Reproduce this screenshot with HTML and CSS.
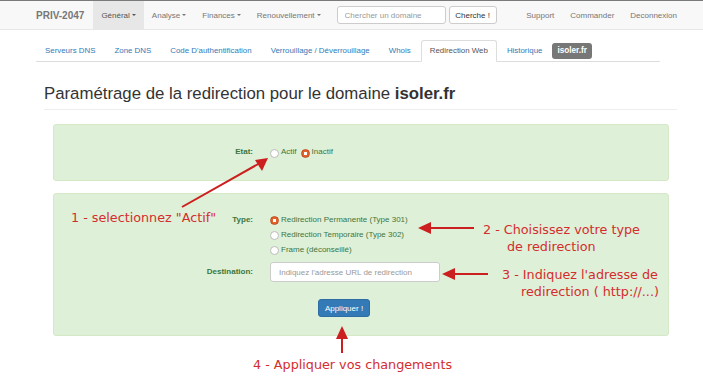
FILE: index.html
```html
<!DOCTYPE html>
<html>
<head>
    <title>Redirection Web - isoler.fr</title>
    <link rel="stylesheet" href="styles.css">
</head>
<body>
    <nav class="navbar">
        <span class="brand">PRIV-2047</span>
        <ul class="nav-menu">
            <li class="active"><a href="#">Général<span class="caret"></span></a></li>
            <li><a href="#">Analyse<span class="caret"></span></a></li>
            <li><a href="#">Finances<span class="caret"></span></a></li>
            <li><a href="#">Renouvellement<span class="caret"></span></a></li>
        </ul>
        <form class="search-form">
            <input type="text" class="search-input" placeholder="Chercher un domaine">
            <button type="button" class="search-button">Cherche !</button>
        </form>
        <ul class="nav-menu nav-right">
            <li><a href="#">Support</a></li>
            <li><a href="#">Commander</a></li>
            <li><a href="#">Deconnexion</a></li>
        </ul>
    </nav>

    <ul class="tabs">
        <li><a href="#">Serveurs DNS</a></li>
        <li><a href="#">Zone DNS</a></li>
        <li><a href="#">Code D'authentification</a></li>
        <li><a href="#">Verrouillage / Déverrouillage</a></li>
        <li><a href="#">Whois</a></li>
        <li class="active"><a href="#">Redirection Web</a></li>
        <li><a href="#">Historique</a></li>
        <li class="badge-item"><span class="badge">isoler.fr</span></li>
    </ul>

    <h3 class="page-title">Paramétrage de la redirection pour le domaine <b>isoler.fr</b></h3>

    <div class="panel panel-state">
        <div class="form-row">
            <label class="form-label">Etat:</label>
            <div class="form-field inline">
                <span class="radio"><input type="radio" name="etat"> Actif</span>
                <span class="radio"><input type="radio" name="etat" checked> Inactif</span>
            </div>
        </div>
    </div>

    <div class="panel panel-options">
        <div class="form-row">
            <label class="form-label">Type:</label>
            <div class="form-field">
                <div class="radio"><input type="radio" name="type" checked> Redirection Permanente (Type 301)</div>
                <div class="radio"><input type="radio" name="type"> Redirection Temporaire (Type 302)</div>
                <div class="radio"><input type="radio" name="type"> Frame (déconseillé)</div>
            </div>
        </div>
        <div class="form-row row-dest">
            <label class="form-label">Destination:</label>
            <div class="form-field">
                <input type="text" class="dest-input" placeholder="Indiquez l'adresse URL de redirection">
            </div>
        </div>
        <div class="form-row row-submit">
            <button type="button" class="btn-apply">Appliquer !</button>
        </div>
    </div>

    <!-- annotations drawn over the screenshot -->
    <svg class="arrows" width="703" height="391" viewBox="0 0 703 391">
        <g stroke="#cc1f1f" stroke-width="2" fill="#cc1f1f">
            <line x1="182" y1="207" x2="260" y2="163" />
            <polygon points="268,158 255,160 262,171" stroke="none" />
            <line x1="474" y1="228" x2="428" y2="228" />
            <polygon points="418,228 431,222 431,234" stroke="none" />
            <line x1="488" y1="274" x2="452" y2="274" />
            <polygon points="442,274 455,268 455,280" stroke="none" />
            <line x1="342" y1="353" x2="342" y2="336" />
            <polygon points="342,326 336,339 348,339" stroke="none" />
        </g>
    </svg>
    <div class="note note-1">1 - selectionnez "Actif"</div>
    <div class="note note-2">2 - Choisissez votre type<br><span class="indent-2">de redirection</span></div>
    <div class="note note-3">3 - Indiquez l'adresse de<br><span class="indent-3">redirection ( http://...)</span></div>
    <div class="note note-4">4 - Appliquer vos changements</div>
</body>
</html>
```

FILE: styles.css
```css
body {
    margin: 0;
    min-height: 100vh;
    position: relative;
    font-family: "Liberation Sans", Arial, sans-serif;
    font-size: 8px;
    color: #333;
    background-color: #fff;
}

a {
    text-decoration: none;
}

/* top navbar */
.navbar {
    display: flex;
    align-items: center;
    height: 28px;
    padding: 0 18px 0 36px;
    background-color: #f8f8f8;
    border-top: 1px solid #7a7a7a;
    border-bottom: 1px solid #e7e7e7;
}

.brand {
    font-size: 10px;
    font-weight: bold;
    color: #777;
    margin-right: 9px;
}

.nav-menu {
    display: flex;
    list-style: none;
    margin: 0;
    padding: 0;
    height: 100%;
}

.nav-menu li a {
    display: flex;
    align-items: center;
    height: 100%;
    padding: 0 8px;
    color: #777;
}

.nav-menu li.active a {
    background-color: #e7e7e7;
    color: #555;
}

.caret {
    display: inline-block;
    margin-left: 2px;
    border-top: 2px solid;
    border-left: 2px solid transparent;
    border-right: 2px solid transparent;
}

.nav-right {
    margin-left: auto;
}

.search-form {
    display: flex;
    gap: 3px;
    margin-left: 8px;
}

.search-input {
    width: 109px;
    height: 18px;
    box-sizing: border-box;
    border: 1px solid #ccc;
    border-radius: 3px;
    padding: 0 7px;
    font-family: inherit;
    font-size: 8px;
    color: #555;
}

.search-input::placeholder {
    color: #999;
}

.search-button {
    width: 48px;
    height: 18px;
    border: 1px solid #ccc;
    border-radius: 3px;
    background-color: #fff;
    font-family: inherit;
    font-size: 8px;
    font-weight: normal;
    color: #333;
    padding: 0;
}

/* tabs */
.tabs {
    display: flex;
    list-style: none;
    margin: 10px 0 0 36px;
    padding: 0;
    width: 624px;
    border-bottom: 1px solid #ddd;
    font-size: 7.9px;
}

.tabs li {
    margin-right: 1px;
    margin-bottom: -1px;
}

.tabs li a {
    display: block;
    padding: 5px 8px;
    line-height: 10px;
    border: 1px solid transparent;
    border-radius: 3px 3px 0 0;
    color: #337ab7;
}

.tabs li.active a {
    color: #555;
    background-color: #fff;
    border-color: #ddd #ddd transparent;
}

.tabs .badge-item {
    align-self: center;
    margin-bottom: 0;
}

.badge {
    display: block;
    padding: 0 5px;
    line-height: 16px;
    border-radius: 3px;
    background-color: #777;
    color: #fff;
    font-weight: bold;
    font-size: 8.2px;
}

/* title */
.page-title {
    margin: 22px 26px 14px 44px;
    padding-bottom: 5px;
    border-bottom: 1px solid #eee;
    font-size: 16.8px;
    line-height: 20px;
    font-weight: normal;
}

/* green panels */
.panel {
    margin: 0 34px 12px 53px;
    background-color: #dff0d8;
    border: 1px solid #d6e9c6;
    border-radius: 3px;
    color: #3c763d;
}

.panel-state {
    padding: 21px 0 22px;
}

.panel-options {
    padding: 18px 0 18px;
}

.form-row {
    display: flex;
    align-items: flex-start;
}

.form-label {
    width: 199px;
    text-align: right;
    font-weight: bold;
    line-height: 15px;
}

.panel-state .form-label,
.panel-state .form-field {
    line-height: 12px;
}

.form-field {
    margin-left: 17px;
}

.form-field.inline {
    display: flex;
    gap: 4px;
}

.radio {
    display: flex;
    align-items: center;
    height: 15px;
}

.panel-state .radio {
    height: 12px;
}

.radio input {
    appearance: none;
    width: 9px;
    height: 9px;
    margin: 2px 2px 0 0;
    border: 1px solid #bbb;
    border-radius: 50%;
    background-color: #fff;
    box-sizing: border-box;
}

.radio input:checked {
    border-color: #c14a1f;
    background: radial-gradient(circle, #fff 0 1.6px, #e2622c 2px);
}

.row-dest {
    margin-top: 5px;
}

.row-dest .form-label {
    line-height: 20px;
}

.dest-input {
    width: 170px;
    height: 20px;
    box-sizing: border-box;
    border: 1px solid #ccc;
    border-radius: 3px;
    padding: 0 8px;
    font-family: inherit;
    font-size: 8px;
}

.dest-input::placeholder {
    color: #999;
}

.row-submit {
    margin-top: 17px;
    padding-left: 264px;
}

.btn-apply {
    width: 52px;
    height: 18px;
    padding: 0;
    border: 1px solid #2e6da4;
    border-radius: 3px;
    background-color: #337ab7;
    color: #fff;
    font-family: inherit;
    font-size: 8px;
}

/* red annotations */
.arrows {
    position: absolute;
    top: 0;
    left: 0;
    pointer-events: none;
}

.note {
    position: absolute;
    font-family: "DejaVu Sans", sans-serif;
    font-size: 12.75px;
    line-height: 16.5px;
    color: #d42d2d;
    white-space: nowrap;
}

.note-1 {
    left: 71px;
    top: 210px;
}

.note-2 {
    left: 483px;
    top: 222px;
}

.indent-2 {
    margin-left: 24px;
}

.note-3 {
    left: 502px;
    top: 267px;
}

.indent-3 {
    margin-left: 19px;
}

.note-4 {
    left: 253px;
    top: 357px;
}
```
